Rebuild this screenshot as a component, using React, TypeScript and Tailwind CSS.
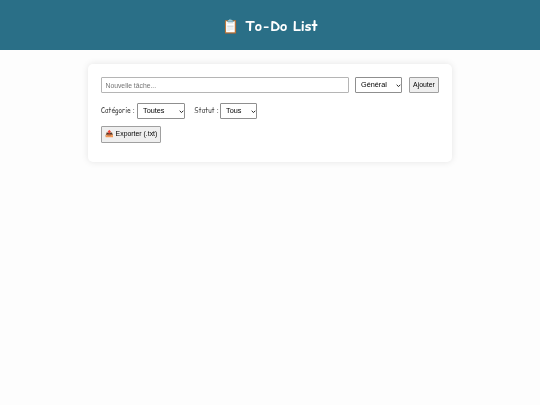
function Chevron() {
  return (
    <svg className="pointer-events-none absolute right-[1.5px] top-[6.5px] h-[3.5px] w-[5px]" viewBox="0 0 6 4" fill="none">
      <path d="M0.8 0.8 L3 3 L5.2 0.8" stroke="#222" strokeWidth="1.2" />
    </svg>
  );
}

function Select({ label, width }: { label: string; width: string }) {
  return (
    <span className={`relative block h-[16px] ${width}`}>
      <select className="block h-full w-full appearance-none rounded-[1px] border border-[#8f8f8f] bg-white pl-[5px] font-['Liberation_Sans',sans-serif] text-[7.3px] text-black">
        <option>{label}</option>
      </select>
      <Chevron />
    </span>
  );
}

export default function App() {
  return (
    <div className="min-h-[405px] bg-[#fdfdfd] font-['Comic_Relief',cursive] blur-[0.35px]">
      <header className="flex h-[50px] items-center justify-center bg-[#2a6f87] pt-[3px]">
        <h1 className="text-[13.7px] font-bold leading-none text-white">📋 To-Do List</h1>
      </header>
      <main className="mx-auto mt-[14px] h-[98px] w-[364px] rounded-[5px] bg-white px-[13px] pt-[13px] shadow-[0_0_7px_rgba(0,0,0,0.1)]">
        <div className="flex items-center">
          <input
            placeholder="Nouvelle tâche..."
            className="h-[16px] w-[248px] rounded-[1px] border border-[#b5b5b5] bg-white px-[3.5px] font-['Liberation_Sans',sans-serif] text-[6.8px] text-black placeholder:text-[#757575]"
          />
          <span className="ml-[6px]">
            <Select label="Général" width="w-[47px]" />
          </span>
          <button className="ml-[7px] h-[16px] w-[30px] rounded-[1px] border border-[#a0a0a0] bg-[#efefef] font-['Liberation_Sans',sans-serif] text-[6.9px] text-black">
            Ajouter
          </button>
        </div>
        <div className="mt-[10px] flex items-center whitespace-nowrap text-[6.6px] text-[#444]">
          <label className="w-[35px]">Catégorie :</label>
          <span className="ml-[1px]">
            <Select label="Toutes" width="w-[48px]" />
          </span>
          <label className="ml-[9px] w-[24px]">Statut :</label>
          <span className="ml-[2px]">
            <Select label="Tous" width="w-[37px]" />
          </span>
        </div>
        <div className="mt-[7px] flex">
          <button className="h-[17px] w-[60px] whitespace-nowrap rounded-[1px] border border-[#a0a0a0] bg-[#efefef] font-['Liberation_Sans',sans-serif] text-[6.9px] text-black">
            📤 Exporter (.txt)
          </button>
        </div>
      </main>
    </div>
  );
}
